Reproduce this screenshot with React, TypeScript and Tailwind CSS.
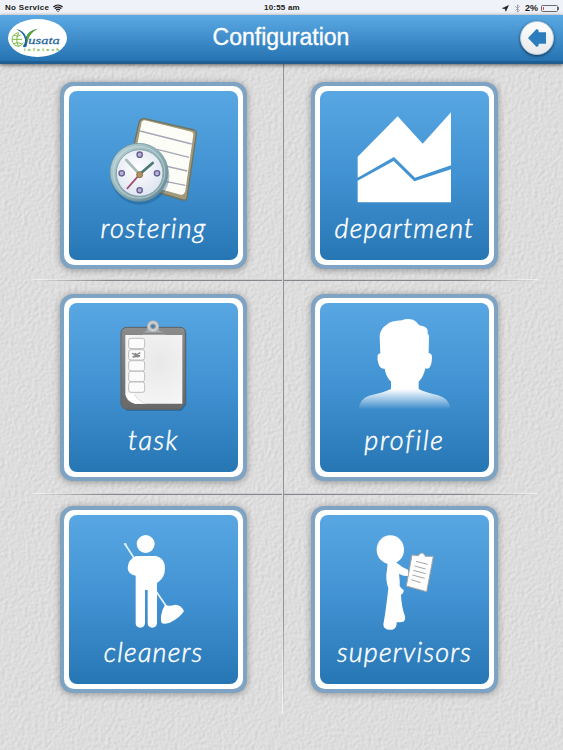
import React from 'react';
import { Bluetooth, Navigation, Wifi } from 'lucide-react';

interface TileProps {
  label: string;
  labelClass: string;
  children: React.ReactNode;
}

function Tile({ label, labelClass, children }: TileProps) {
  return (
    <button className="block w-[187px] h-[187px] shrink-0 rounded-[13px] bg-[#7fa4c3] p-1 shadow-[0_1px_7px_rgba(0,0,0,0.35)]">
      <span className="block w-full h-full rounded-[10px] bg-white p-[5px]">
        <span className="flex flex-col items-center w-full h-full rounded-[8px] bg-linear-to-b from-[#58a7e3] via-[#4192d2] to-[#2776b4]">
          {children}
          <span
            className={`block h-8 -mt-1.5 leading-8 whitespace-nowrap font-['Lato',sans-serif] font-light italic text-[27px] text-white [-webkit-text-stroke:0.5px_white] ${labelClass}`}
          >
            {label}
          </span>
        </span>
      </span>
    </button>
  );
}

function RosteringIcon() {
  return (
    <svg viewBox="57 63 507 381" className="block w-[169px] h-[127px] shrink-0">
      <defs>
        <linearGradient id="rim" x1="0" y1="0" x2="1" y2="1">
          <stop offset="0" stopColor="#bfd8da" />
          <stop offset="0.5" stopColor="#8fb0b8" />
          <stop offset="1" stopColor="#5d8490" />
        </linearGradient>
        <radialGradient id="face" cx="0.45" cy="0.4" r="0.7">
          <stop offset="0" stopColor="#ffffff" />
          <stop offset="1" stopColor="#d9e1ee" />
        </radialGradient>
      </defs>
      <path d="M284 146 L432 180 Q440 183 439 192 L411 384 Q409 393 399 390 L232 340 Q224 336 228 326 L268 155 Q272 144 284 146Z" fill="#a29a7c" stroke="#6f745f" strokeWidth="4" />
      <path d="M284 151 L424 185 Q431 187 430 194 L406 362 Q403 375 392 374 L240 332 L275 157 Q278 150 284 151Z" fill="#fdfdf8" />
      <path d="M270 183 L425 222 M322 238 L417 262 M346 288 L412 303 M346 334 L406 346" stroke="#a6a6b5" strokeWidth="4" />
      <ellipse cx="270" cy="318" rx="88" ry="86" fill="#174f7a" opacity="0.35" />
      <circle cx="267" cy="307" r="87" fill="url(#rim)" stroke="#6b9098" strokeWidth="2" />
      <circle cx="267" cy="307" r="77" fill="none" stroke="#d7e6e6" strokeWidth="4" opacity="0.5" />
      <circle cx="269" cy="309" r="70" fill="url(#face)" stroke="#86a6ac" strokeWidth="3" />
      <path d="M269 313 L229 270" stroke="#a6bcb9" strokeWidth="8" strokeLinecap="round" />
      <path d="M269 313 L308 279" stroke="#4b7774" strokeWidth="8" strokeLinecap="round" />
      <path d="M269 313 L232 355" stroke="#a04a72" strokeWidth="5" strokeLinecap="round" />
      {[[269, 254], [215, 310], [321, 310], [269, 361]].map(([x, y]) => (
        <circle key={`${x}-${y}`} cx={x} cy={y} r="8" fill="#b8b0da" stroke="#655f91" strokeWidth="4" />
      ))}
      <circle cx="269" cy="314" r="9" fill="#b19362" stroke="#8f7448" strokeWidth="3" />
    </svg>
  );
}

function DepartmentIcon() {
  return (
    <svg viewBox="60 63 507 381" className="block w-[169px] h-[127px] shrink-0">
      <path d="M173 260 L293 139 L368 221 L453 127 V286 L345 323 L282 261 L173 323Z" fill="#fff" />
      <path d="M173 332 L281 273 L343 334 L453 298 V397 H173Z" fill="#fff" />
    </svg>
  );
}

function TaskIcon() {
  return (
    <svg viewBox="57 54 507 381" className="block w-[169px] h-[127px] shrink-0">
      <defs>
        <linearGradient id="board" x1="0" y1="0" x2="0" y2="1">
          <stop offset="0" stopColor="#8c8c8c" />
          <stop offset="1" stopColor="#686868" />
        </linearGradient>
        <radialGradient id="sheet" cx="0.6" cy="0.4" r="0.8">
          <stop offset="0" stopColor="#e8e8e8" />
          <stop offset="1" stopColor="#f8f8f8" />
        </radialGradient>
      </defs>
      <path d="M222 134 H402 Q409 136 409 146 V360 L394 378 H230 L214 358Z" fill="#164b74" opacity="0.45" />
      <path d="M232 127 H390 Q406 127 406 143 V354 L390 373 H232 Q213 372 213 352 V145 Q214 127 232 127Z" fill="url(#board)" stroke="#626262" strokeWidth="3" />
      <path d="M226 150 H397 V356 H254 Q229 350 226 327Z" fill="url(#sheet)" />
      <path d="M226 327 Q232 350 256 356 H289 Q258 348 249 323 Q240 332 226 327Z" fill="#fff" />
      <path d="M254 328 Q262 346 288 356" fill="none" stroke="#e0e0e0" strokeWidth="3" />
      {[160, 194, 227, 259, 291].map((y) => (
        <rect key={y} x="236" y={y} width="48" height="31" rx="7" fill="#fbfbfb" stroke="#bdbdbd" strokeWidth="3" />
      ))}
      <path d="M246 205 L270 213 L248 216 L271 203 M256 204 L264 217" fill="none" stroke="#888" strokeWidth="4" />
      <path d="M291 137 V124 A18 18 0 0 1 327 124 V137 L346 144 V150 H278 V144Z" fill="#a9adb0" />
      <path d="M278 145 H346" stroke="#858585" strokeWidth="5" />
      <circle cx="309" cy="124" r="16" fill="#c9ced2" />
      <circle cx="309" cy="124" r="7" fill="#4c82ac" stroke="#8f979d" strokeWidth="3" />
    </svg>
  );
}

function ProfileIcon() {
  return (
    <svg viewBox="60 54 507 381" className="block w-[169px] h-[127px] shrink-0">
      <defs>
        <linearGradient id="fade" gradientUnits="userSpaceOnUse" x1="0" y1="312" x2="0" y2="373">
          <stop offset="0" stopColor="#fff" />
          <stop offset="1" stopColor="#fff" stopOpacity="0" />
        </linearGradient>
      </defs>
      <path
        d="M241 206 L239 153 Q241 130 260 119 Q273 107 306 106 Q320 99 339 104 Q348 107 356 119 Q362 123 368 123 Q381 126 383 137 L383 146 Q387 148 387 155 L386 204 Q397 205 396 219 Q395 241 388 248 Q382 253 376 250 Q371 276 356 290 V312 Q376 322 414 331 Q447 339 452 373 H176 Q179 341 207 332 Q251 323 273 312 V290 Q258 275 254 251 Q242 252 237 241 Q230 226 233 211 Q235 205 241 206Z"
        fill="url(#fade)"
      />
    </svg>
  );
}

function CleanersIcon() {
  return (
    <svg viewBox="57 60 507 381" className="block w-[169px] h-[127px] shrink-0">
      <circle cx="287" cy="147" r="27" fill="#fff" />
      <path d="M225 147 L256 195 M317 287 L350 335" stroke="#e8f3fb" strokeWidth="5" strokeLinecap="round" />
      <circle cx="226" cy="148" r="4" fill="#d5e8f6" />
      <path
        d="M258 183 H318 Q344 188 345 220 Q345 250 321 264 V384 Q320 398 307 398 Q293 397 293 384 V285 H285 V384 Q284 398 271 398 Q257 397 257 384 V242 Q235 240 233 220 Q233 194 258 183Z"
        fill="#fff"
      />
      <path d="M345 330 Q359 335 376 329 Q394 330 402 348 Q390 369 359 383 Q344 388 336 385 Q332 380 333 364 Q335 345 345 330Z" fill="#fff" />
    </svg>
  );
}

function SupervisorsIcon() {
  return (
    <svg viewBox="60 60 507 381" className="block w-[169px] h-[127px] shrink-0">
      <ellipse cx="271" cy="164" rx="41" ry="43" fill="#fff" />
      <path
        d="M263 203 H290 Q307 218 324 224 L327 242 Q313 246 297 236 Q300 258 299 273 L307 283 Q313 283 310 292 Q308 297 303 299 Q304 334 315 364 Q317 376 310 380 Q300 382 290 382 Q291 401 277 404 Q250 407 250 388 Q258 345 265 280 Q255 250 261 224Z"
        fill="#fff"
      />
      <path d="M336 180 L355 182 Q359 173 367 174 Q373 176 376 184 L400 184 L380 290 L319 273Z" fill="#fefefe" stroke="#a6a6a6" strokeWidth="3" />
      <path d="M348 199 L383 208 M344 213 L377 222 M340 226 L377 236 M337 240 L374 250 M334 254 L362 263" stroke="#a5a5a5" strokeWidth="3" />
    </svg>
  );
}

function Logo() {
  return (
    <svg viewBox="24 55 177 114" className="block w-[59px] h-[38px]">
      <ellipse cx="112.500" cy="112" rx="88.500" ry="57" fill="#fff" />
      <g fill="none" stroke="#7abb48" strokeWidth="3">
        <path d="M56 96 Q36 99 36 118 Q39 136 56 137 Q66 135 70 126" />
        <path d="M56 97 Q45 115 55 136 M37 116 H66 M42 104 Q54 110 62 103 M41 129 Q54 122 66 130" />
      </g>
      <path d="M48 86 Q72 89 78 109 Q85 90 113 84 Q91 94 84 113 L80 137 Q74 143 68 137 Q76 129 75 116 Q69 94 48 86Z" fill="#1e67a3" />
      <path d="M79 109 Q86 89 113 84 Q95 94 87 110 L82 126Z" fill="#55a630" />
      <text x="85" y="130" textLength="94" lengthAdjust="spacingAndGlyphs" fontSize="34" fontFamily="Liberation Serif, serif" fontStyle="italic" fill="#25659c" stroke="#25659c" strokeWidth="0.8">
        usata
      </text>
      <text x="73" y="150" textLength="104" fontSize="13" fontFamily="Liberation Sans, sans-serif" fill="#79b94b" stroke="#79b94b" strokeWidth="0.8">
        infotech
      </text>
    </svg>
  );
}

function StatusBar() {
  return (
    <div className="flex items-center justify-between h-[15px] pt-px pl-[5px] pr-1 bg-[#eff2f8] text-[8px] leading-none font-bold text-[#1c1c20]">
      <div className="flex items-center gap-1 w-[120px]">
        <span className="tracking-[0.3px]">No Service</span>
        <Wifi className="w-[10px] h-[10px]" strokeWidth={3.2} />
      </div>
      <span className="tracking-[0.2px]">10:55 am</span>
      <div className="flex items-center justify-end w-[120px]">
        <Navigation className="w-[7px] h-[7px] mr-1" fill="currentColor" />
        <Bluetooth className="w-[9px] h-[9px] mr-[3px] text-[#8b8d92]" strokeWidth={2} />
        <span className="mr-[3px] text-[9px] font-semibold">2%</span>
        <span className="flex w-[17px] h-[7px] rounded-[1.500px] border border-[#66686c] p-px">
          <span className="w-px h-full bg-[#f0403c]" />
        </span>
        <span className="w-px h-[3px] bg-[#66686c]" />
      </div>
    </div>
  );
}

function Header() {
  return (
    <header className="flex items-center justify-between h-[49px] pl-2 pr-[9px] pb-px border-b-[3px] border-[#205e91] bg-linear-to-b from-[#5aa9e4] to-[#2573b2] shadow-[0_1px_4px_rgba(0,0,0,0.6)]">
      <Logo />
      <h1 className="text-[23px] leading-none text-white [-webkit-text-stroke:0.35px_white]">Configuration</h1>
      <div className="flex justify-end w-[59px]">
        <button className="flex items-center justify-center w-[34px] h-[34px] shrink-0 rounded-full bg-linear-to-b from-white to-[#e6e8ea] border border-[#b8c9d8] shadow-[0_1px_3px_rgba(0,0,0,0.6)]">
          <svg viewBox="0 0 54 54" className="w-[18px] h-[18px] shrink-0">
            <path d="M0 27 L25 1 Q32 0 32 7 V10 H54 V44 H32 V47 Q32 54 25 53Z" fill="#2b7dbd" />
          </svg>
        </button>
      </div>
    </header>
  );
}

// Embossed paper grain behind the tiles
function PaperTexture() {
  return (
    <svg className="absolute inset-0 w-full h-full" aria-hidden="true">
      <filter id="paper" x="0" y="0" width="100%" height="100%" colorInterpolationFilters="sRGB">
        <feTurbulence type="fractalNoise" baseFrequency="0.3" numOctaves="2" seed="4" result="noise" />
        <feDiffuseLighting in="noise" surfaceScale="0.35" diffuseConstant="1.05" lightingColor="#e0e0e0">
          <feDistantLight azimuth="215" elevation="70" />
        </feDiffuseLighting>
      </filter>
      <rect width="100%" height="100%" filter="url(#paper)" />
    </svg>
  );
}

const LINE_LEFT = 'w-[249px] h-[2px] shrink-0 bg-linear-to-l from-[#86868c] from-70% to-transparent border-t border-white/60 ml-[33px]';
const LINE_RIGHT = 'w-[254px] h-[2px] shrink-0 bg-linear-to-r from-[#86868c] from-70% to-transparent border-t border-white/60';

export default function App() {
  return (
    <div className="relative isolate flex flex-col w-full h-[750px] overflow-hidden bg-[#dadada] font-['Liberation_Sans',Arial,sans-serif]">
      <PaperTexture />
      <div className="relative z-10">
        <StatusBar />
        <Header />
      </div>
      <main className="relative flex flex-1">
        <div className="flex flex-col w-[282px] pt-[18px]">
          <div className="pl-[60px]">
            <Tile label="rostering" labelClass="tracking-[1.2px]"><RosteringIcon /></Tile>
          </div>
          <div className={`${LINE_LEFT} mt-[10px] mb-[13px]`} />
          <div className="pl-[60px]">
            <Tile label="task" labelClass="tracking-[1.5px]"><TaskIcon /></Tile>
          </div>
          <div className={`${LINE_LEFT} mt-[12px] mb-[11px]`} />
          <div className="pl-[60px]">
            <Tile label="cleaners" labelClass="tracking-[1.2px]"><CleanersIcon /></Tile>
          </div>
        </div>
        <div className="w-[2px] h-[650px] bg-linear-to-b from-[#929296] from-85% to-transparent border-l border-white/70" />
        <div className="flex flex-col flex-1 pt-[18px]">
          <div className="pl-[27px]">
            <Tile label="department" labelClass="tracking-[1.1px]"><DepartmentIcon /></Tile>
          </div>
          <div className={`${LINE_RIGHT} mt-[10px] mb-[13px]`} />
          <div className="pl-[27px]">
            <Tile label="profile" labelClass="tracking-[1.8px]"><ProfileIcon /></Tile>
          </div>
          <div className={`${LINE_RIGHT} mt-[12px] mb-[11px]`} />
          <div className="pl-[27px]">
            <Tile label="supervisors" labelClass="tracking-[1.2px]"><SupervisorsIcon /></Tile>
          </div>
        </div>
      </main>
    </div>
  );
}
